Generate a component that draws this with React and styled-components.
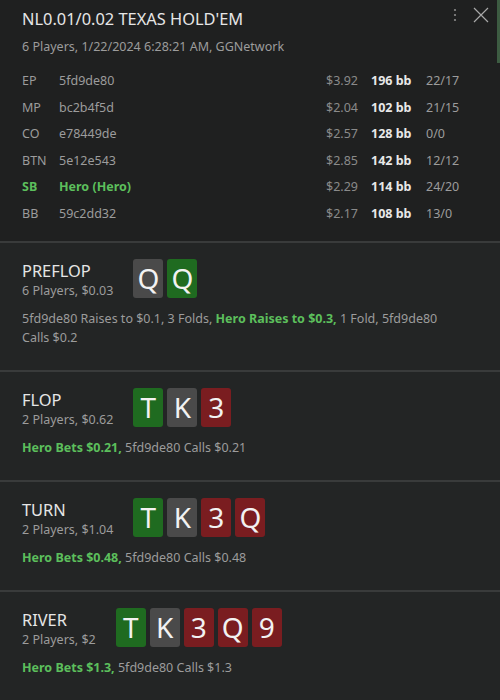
import React from 'react';
import styled, { createGlobalStyle } from 'styled-components';

const Global = createGlobalStyle`
  html, body { margin: 0; padding: 0; background: #1f2020; }
  body { font-family: "Noto Sans", "Open Sans", sans-serif; }
`;

const Panel = styled.div`
  position: relative;
  width: 500px;
  height: 700px;
  overflow: hidden;
  background: #232525;
`;

const Scroll = styled.div`
  position: absolute;
  right: 0;
  top: 0;
  width: 3px;
  height: 63px;
  background: #3d5c42;
`;

const Header = styled.header`
  position: relative;
  background: #1f2020;
  padding: 8px 30px 13px 22px;
  border-bottom: 2px solid #393b3b;
`;

const Title = styled.h1`
  margin: 0;
  font-size: 16.4px;
  line-height: 22px;
  font-weight: 400;
  color: #e6e6e6;
`;

const Sub = styled.div`
  margin-top: ${p => p.$top || 0}px;
  font-size: 12.5px;
  line-height: 18px;
  color: #9c9c9c;
`;

const Tools = styled.div`
  position: absolute;
  top: 7px;
  right: 11px;
  display: flex;
  align-items: center;
  gap: 15px;
`;

const Table = styled.div`
  margin-top: 12px;
  display: grid;
  grid-template-columns: 24px 1fr auto 42px 44px;
  column-gap: 13px;
  font-size: 12.5px;
  line-height: 26.6px;
`;

const Cell = styled.div`
  color: ${p => (p.$hero ? '#5cbf5c' : p.$dim ? '#8a8a8a' : '#9c9c9c')};
  font-weight: ${p => (p.$hero || p.$bold ? 700 : 400)};
  ${p => p.$bold && 'color: #e8e8e8;'}
  text-align: ${p => (p.$right ? 'right' : 'left')};
  white-space: nowrap;
`;

const Street = styled.section`
  padding: 16px 40px 23px 22px;
  border-bottom: 2px solid #393b3b;
`;

const Top = styled.div`
  display: flex;
  align-items: flex-start;
  gap: 20px;
`;

const Info = styled.div`
  padding-top: 1px;
`;

const Name = styled.div`
  font-size: 16.4px;
  line-height: 22px;
  color: #e6e6e6;
`;

const Cards = styled.div`
  display: flex;
  gap: 4px;
`;

const Card = styled.div`
  width: 30px;
  height: 39px;
  border-radius: 3px;
  display: flex;
  align-items: center;
  justify-content: center;
  font-size: 28px;
  color: #f2f2f2;
  background: ${p => p.$c === 'g' ? '#1f6b20' : p.$c === 'r' ? '#7a1d20' : '#4a4a4a'};
`;

const Actions = styled.div`
  margin-top: 9px;
  font-size: 12.5px;
  line-height: 19px;
  color: #9c9c9c;
`;

const Hero = styled.b`
  color: #5cbf5c;
  font-weight: 700;
`;

const players = [
  ['EP', '5fd9de80', '$3.92', '196 bb', '22/17'],
  ['MP', 'bc2b4f5d', '$2.04', '102 bb', '21/15'],
  ['CO', 'e78449de', '$2.57', '128 bb', '0/0'],
  ['BTN', '5e12e543', '$2.85', '142 bb', '12/12'],
  ['SB', 'Hero (Hero)', '$2.29', '114 bb', '24/20', true],
  ['BB', '59c2dd32', '$2.17', '108 bb', '13/0'],
];

const streets = [
  {
    name: 'PREFLOP', sub: '6 Players, $0.03',
    cards: [['Q', 'k'], ['Q', 'g']],
    acts: <>5fd9de80 Raises to $0.1, 3 Folds, <Hero>Hero Raises to $0.3,</Hero> 1 Fold, 5fd9de80 Calls $0.2</>,
  },
  {
    name: 'FLOP', sub: '2 Players, $0.62',
    cards: [['T', 'g'], ['K', 'k'], ['3', 'r']],
    acts: <><Hero>Hero Bets $0.21,</Hero> 5fd9de80 Calls $0.21</>,
  },
  {
    name: 'TURN', sub: '2 Players, $1.04',
    cards: [['T', 'g'], ['K', 'k'], ['3', 'r'], ['Q', 'r']],
    acts: <><Hero>Hero Bets $0.48,</Hero> 5fd9de80 Calls $0.48</>,
  },
  {
    name: 'RIVER', sub: '2 Players, $2',
    cards: [['T', 'g'], ['K', 'k'], ['3', 'r'], ['Q', 'r'], ['9', 'r']],
    acts: <><Hero>Hero Bets $1.3,</Hero> 5fd9de80 Calls $1.3</>,
  },
];

export default function App() {
  return (
    <Panel>
      <Global />
      <Header>
        <Title>NL0.01/0.02 TEXAS HOLD'EM</Title>
        <Sub $top={8}>6 Players, 1/22/2024 6:28:21 AM, GGNetwork</Sub>
        <Tools>
          <svg width="6" height="16" viewBox="0 0 6 16">
            <circle cx="3" cy="3" r="1.1" fill="#8a8a8a" />
            <circle cx="3" cy="8" r="1.1" fill="#8a8a8a" />
            <circle cx="3" cy="13" r="1.1" fill="#8a8a8a" />
          </svg>
          <svg width="16" height="16" viewBox="0 0 16 16">
            <path d="M1 1 L15 15 M15 1 L1 15" stroke="#a8a8a8" strokeWidth="1.2" />
          </svg>
        </Tools>
        <Table>
          {players.map(([pos, name, usd, bb, st, hero]) => (
            <React.Fragment key={pos}>
              <Cell $hero={hero}>{pos}</Cell>
              <Cell $hero={hero}>{name}</Cell>
              <Cell $dim $right>{usd}</Cell>
              <Cell $bold>{bb}</Cell>
              <Cell>{st}</Cell>
            </React.Fragment>
          ))}
        </Table>
      </Header>
      {streets.map(s => (
        <Street key={s.name}>
          <Top>
            <Info>
              <Name>{s.name}</Name>
              <Sub>{s.sub}</Sub>
            </Info>
            <Cards>
              {s.cards.map(([v, c], i) => <Card key={i} $c={c}>{v}</Card>)}
            </Cards>
          </Top>
          <Actions>{s.acts}</Actions>
        </Street>
      ))}
      <Scroll />
    </Panel>
  );
}
